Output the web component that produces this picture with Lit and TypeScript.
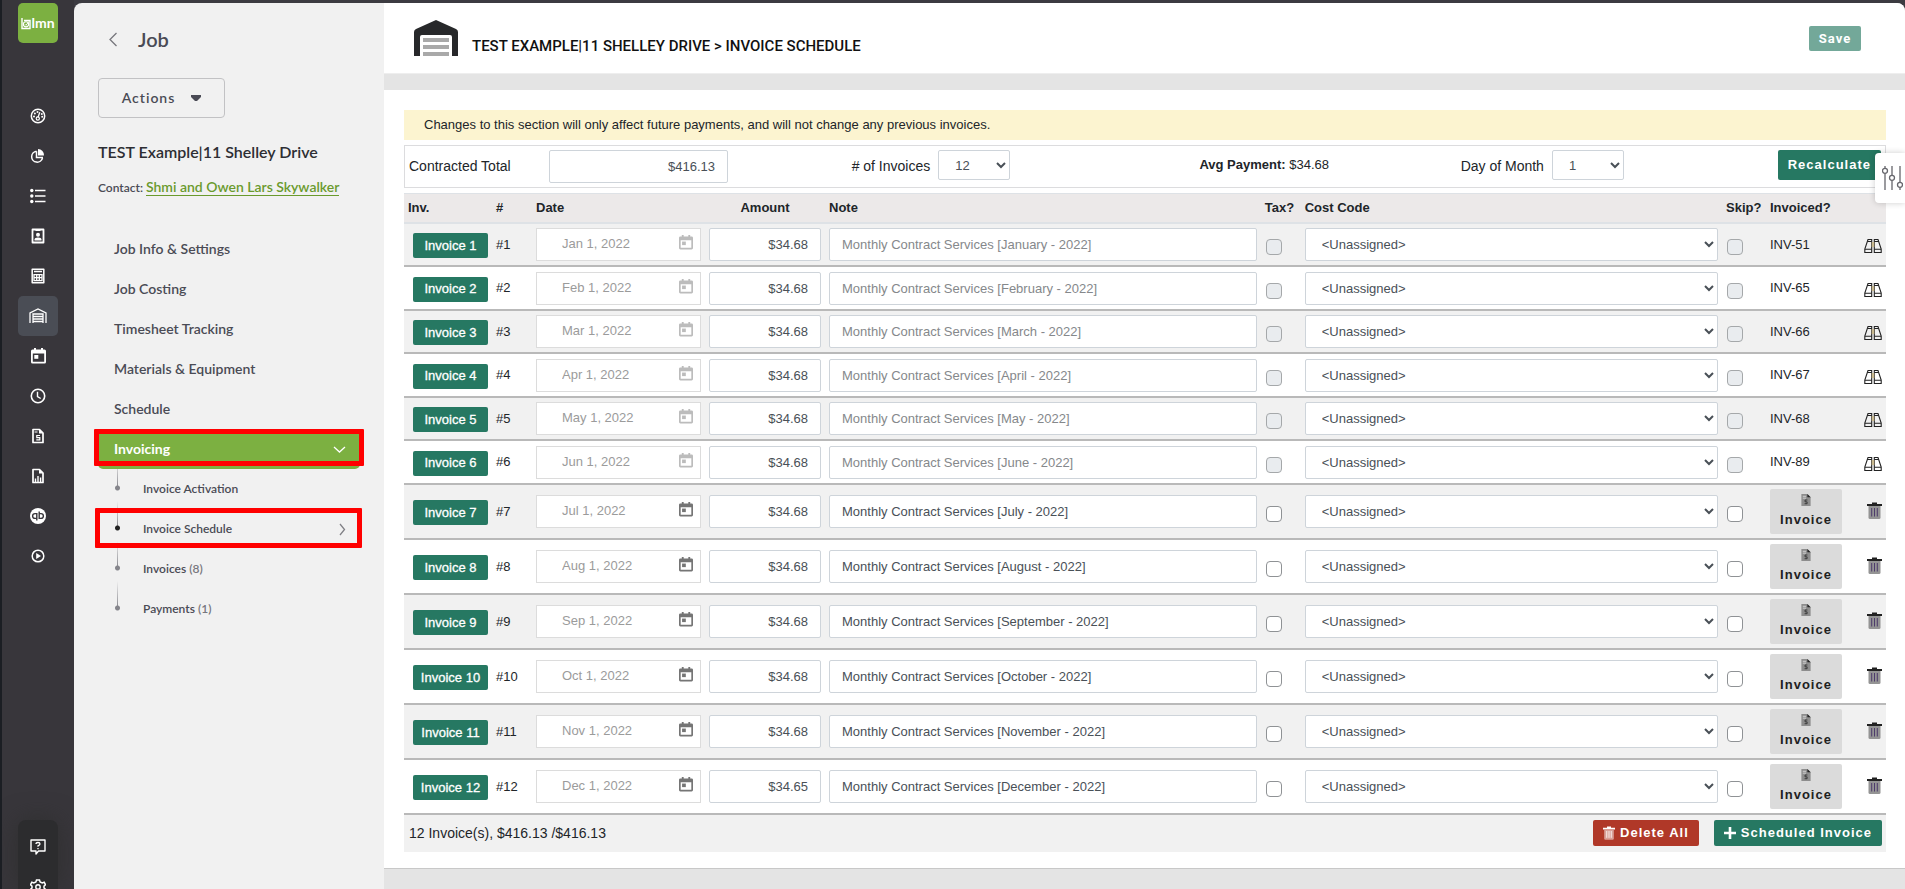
import { LitElement, html, css, svg, nothing } from "lit";
import { customElement } from "lit/decorators.js";

interface Invoice {
  n: number;
  date: string;
  amount: string;
  period: string;
  posted?: string;
}

const INVOICES: Invoice[] = [
  { n: 1, date: "Jan 1, 2022", amount: "$34.68", period: "January", posted: "INV-51" },
  { n: 2, date: "Feb 1, 2022", amount: "$34.68", period: "February", posted: "INV-65" },
  { n: 3, date: "Mar 1, 2022", amount: "$34.68", period: "March", posted: "INV-66" },
  { n: 4, date: "Apr 1, 2022", amount: "$34.68", period: "April", posted: "INV-67" },
  { n: 5, date: "May 1, 2022", amount: "$34.68", period: "May", posted: "INV-68" },
  { n: 6, date: "Jun 1, 2022", amount: "$34.68", period: "June", posted: "INV-89" },
  { n: 7, date: "Jul 1, 2022", amount: "$34.68", period: "July" },
  { n: 8, date: "Aug 1, 2022", amount: "$34.68", period: "August" },
  { n: 9, date: "Sep 1, 2022", amount: "$34.68", period: "September" },
  { n: 10, date: "Oct 1, 2022", amount: "$34.68", period: "October" },
  { n: 11, date: "Nov 1, 2022", amount: "$34.68", period: "November" },
  { n: 12, date: "Dec 1, 2022", amount: "$34.65", period: "December" },
];

const icon = (body: unknown, w = 18, h = w, vb = `0 0 ${w} ${h}`) =>
  html`<svg width=${w} height=${h} viewBox=${vb} aria-hidden="true">${body}</svg>`;

const calendar = svg`<path fill="currentColor" fill-rule="evenodd" d="M3 0h2v1.500h5V0h2v1.500h1.500a1.500 1.500 0 0 1 1.500 1.500v11a1.500 1.500 0 0 1-1.500 1.500h-12A1.500 1.500 0 0 1 0 14V3a1.500 1.500 0 0 1 1.500-1.500H3zM1.800 5.500v8.200h11.400V5.500z"/><rect x="3.300" y="7" width="4" height="3.800" fill="currentColor"/>`;
const sheet = svg`<path d="M2 1.500h6.500L12 5v9.500H2z" fill="none" stroke="currentColor" stroke-width="1.700" stroke-linejoin="round"/><path d="M8 1.200V5.500h4.200z" fill="currentColor"/>`;

const RAIL: { label: string; on?: boolean; art: unknown }[] = [
  {
    label: "Dashboard",
    art: icon(svg`<circle cx="8" cy="8" r="6.700" fill="none" stroke="currentColor" stroke-width="1.500"/><path d="M9.800 4.200 8 9.500" stroke="currentColor" stroke-width="1.300"/><circle cx="7.800" cy="10.500" r="1.600" fill="none" stroke="currentColor" stroke-width="1.200"/><g fill="currentColor"><circle cx="4" cy="8.500" r="1"/><circle cx="4.900" cy="5.400" r="1"/><circle cx="7.500" cy="4" r="1"/><circle cx="11.800" cy="6" r="1"/><circle cx="12.200" cy="8.800" r="1"/></g>`, 16),
  },
  {
    label: "Reports",
    art: icon(svg`<path d="M6.500 3.200A5.500 5.500 0 1 0 12.500 10" fill="none" stroke="currentColor" stroke-width="1.500"/><path d="M6.500 3.200v6.300h6.500" fill="none" stroke="currentColor" stroke-width="1.500"/><path d="M8 1a6 6 0 0 1 6 6.500H8z" fill="currentColor"/>`, 16),
  },
  {
    label: "Lists",
    art: icon(svg`<g fill="currentColor"><circle cx="1.800" cy="2.500" r="1.700"/><circle cx="1.800" cy="8" r="1.700"/><circle cx="1.800" cy="13.500" r="1.700"/><path d="M5 1.800h10.500v1.500H5zM5 7.300h10.500v1.500H5zM5 12.700h10.500v1.500H5z"/></g>`, 16),
  },
  {
    label: "Contacts",
    art: icon(svg`<path d="M1.500 1.500h11v13h-11z" fill="none" stroke="currentColor" stroke-width="1.800" stroke-linejoin="round"/><path d="M4.500 1h5v2h-5z" fill="currentColor"/><circle cx="7" cy="6.800" r="2" fill="currentColor"/><path d="M3.500 12.500v-1q0-2 3.500-2t3.500 2v1z" fill="currentColor"/>`, 14, 16),
  },
  {
    label: "Estimating",
    art: icon(svg`<path d="M1.200 1.200h11.600v13.600H1.200z" fill="none" stroke="currentColor" stroke-width="1.500" stroke-linejoin="round"/><path d="M3 3.500h8M3 6.700h8v6H3zM3 9.700h8M5.700 6.700v6M8.300 6.700v6" fill="none" stroke="currentColor" stroke-width="1.300"/>`, 14, 16),
  },
  {
    label: "Jobs",
    on: true,
    art: icon(svg`<path d="M1 15V5L9 1l8 4v10M4 15V6h10v9M4 8.500h10M4 11h10M4 13.500h10" fill="none" stroke="currentColor" stroke-width="1.300"/>`, 18, 16),
  },
  { label: "Calendar", art: icon(calendar, 15, 16) },
  {
    label: "Time",
    art: icon(svg`<circle cx="8" cy="8" r="6.700" fill="none" stroke="currentColor" stroke-width="1.600"/><path d="M7.500 3.800v4.700l3.200 2" fill="none" stroke="currentColor" stroke-width="1.400"/>`, 16),
  },
  {
    label: "Billing",
    art: icon(svg`${sheet}<path d="M9 7.500H5.800v2.200h3v2.200H5.300M3.500 4h3" fill="none" stroke="currentColor" stroke-width="1.200"/>`, 14, 16),
  },
  {
    label: "Analytics",
    art: icon(svg`${sheet}<path d="M4.500 14v-3.500M7 14V8M9.600 14V9.500" fill="none" stroke="currentColor" stroke-width="1.400"/>`, 14, 16),
  },
  {
    label: "QuickBooks",
    art: icon(svg`<circle cx="8" cy="8" r="8" fill="currentColor"/><path d="M6.800 12.500V5.600H5a2.400 2.400 0 0 0 0 4.800h1.500M9.200 3.500v6.900H11a2.400 2.400 0 0 0 0-4.800H9.500" fill="none" stroke="#38363b" stroke-width="1.400"/>`, 16),
  },
  {
    label: "Tutorials",
    art: icon(svg`<circle cx="8" cy="8" r="5.800" fill="none" stroke="currentColor" stroke-width="1.500"/><path d="M6.200 5v6l4.800-3z" fill="currentColor"/>`, 16),
  },
];

const garage = icon(
  svg`<path d="M0 36V12q0-2 2-3L22 0l20 9q2 1 2 3v24h-6V17q0-2-2-2H8q-2 0-2 2v19z" fill="#27282a"/><path d="M9 18h26v4H9zM9 25h26v4H9zM9 32h26v4H9z" fill="#a9a9a9"/>`,
  44, 36);

const binoculars = icon(
  svg`<g fill="none" stroke="#222" stroke-width="1.100"><path d="M4 1.500h3.700v13H.8v-3.500z"/><path d="M14 1.500h-3.700v13h6.900v-3.500z"/><path d="M3.500 3.500h4.200M10.300 3.500h4.200M1 11.300h6.700M10.300 11.300H17"/></g><path d="M7.700 4h2.600v5H7.700z" fill="#c9b98f"/>`,
  18, 16);

const trash = (cap: string, fill: string, bar: string, w = 15, h = 17) => icon(
  svg`<path d="M0 2h5V.5h5V2h5v2H0z" fill=${cap}/><path d="M1.500 4h12v11.500q0 1.500-1.500 1.500H3q-1.500 0-1.500-1.500z" fill=${fill}/><path d="M4.700 6v8.500M7.500 6v8.500M10.300 6v8.500" stroke=${bar} stroke-width="1"/>`,
  w, h, "0 0 15 17");

const invoiceGlyph = icon(
  svg`<path d="M0 0h6.500L10 3.500V13H0z" fill="#8d8d8d"/><path d="M6.500 0 10 3.500H6.500z" fill="#222"/><path d="M1.500 2.500h3.500M1.500 4.500h3.500" stroke="#d5d5d5"/><path d="M6.500 6.500H4v2h2.200v2H3.500" fill="none" stroke="#333"/>`,
  10, 13);

@customElement("job-rail")
export class JobRail extends LitElement {
  static styles = css`
    :host {
      display: flex;
      flex-direction: column;
      align-items: center;
      justify-content: space-between;
      box-sizing: border-box;
      width: 74px;
      padding: 3px 0 0;
      border-left: 2px solid #1b1e23;
      background: #38363b;
      color: #fff;
      overflow: hidden;
    }
    .top {
      display: flex;
      flex-direction: column;
      align-items: center;
      gap: 53px;
    }
    .logo {
      display: flex;
      align-items: center;
      justify-content: center;
      width: 40px;
      height: 40px;
      border-radius: 5px;
      background: #7cb041;
      color: #fff;
      font: 700 14px/14px Lato, sans-serif;
      text-decoration: none;
    }
    nav {
      display: flex;
      flex-direction: column;
    }
    .item {
      display: flex;
      flex: none;
      align-items: center;
      justify-content: center;
      width: 40px;
      height: 40px;
      padding: 0;
      border: 0;
      border-radius: 5px;
      background: none;
      color: #fff;
    }
    .on {
      background: #4a4d55;
    }
    .foot {
      flex: none;
      padding: 7px 0 0;
      height: 62px;
      border-radius: 8px 8px 0 0;
      background: #2c2c2e;
      box-shadow: 0 0 24px #2f2f2f;
    }
  `;

  render() {
    return html`
      <div class="top">
        <a class="logo" href="#" aria-label="LMN home">
          ${icon(svg`<path d="M1 1v10.500h8V3.500H3" fill="none" stroke="#fff" stroke-width="1.400"/><circle cx="5" cy="7.300" r="2.600" fill="none" stroke="#fff" stroke-width="1.100"/><path d="m4 7.300 1 1 3-4" fill="none" stroke="#fff"/>`, 10, 13)}
          <span>lmn</span>
        </a>
        <nav aria-label="Main">
          ${RAIL.map((r) => html`<button class="item ${r.on ? "on" : ""}" aria-label=${r.label}>${r.art}</button>`)}
        </nav>
      </div>
      <nav class="foot" aria-label="Support">
        <button class="item" aria-label="Help">
          ${icon(svg`<path d="M1 1h14v11H8.500L6 15v-3H1z" fill="none" stroke="currentColor" stroke-width="1.400" stroke-linejoin="round"/><path d="M6 5q0-1.500 2-1.500T10 5q0 1-2 1.800v.9M8 9v1.300" fill="none" stroke="currentColor" stroke-width="1.300"/>`, 16)}
        </button>
        <button class="item" aria-label="Settings">
          ${icon(svg`<path d="m6.500 1 3 0 .6 2 2.100 1 2-.8 1.300 2.600-1.500 1.400v1.800l1.500 1.400-1.300 2.600-2-.8-2.100 1-.6 2h-3l-.6-2-2.100-1-2 .8L.5 10.400 2 9V7.200L.5 5.800l1.300-2.600 2 .8 2.100-1z" fill="none" stroke="currentColor" stroke-width="1.500"/><circle cx="8" cy="8" r="2.200" fill="none" stroke="currentColor" stroke-width="1.400"/>`, 16)}
        </button>
      </nav>
    `;
  }
}

@customElement("job-menu")
export class JobMenu extends LitElement {
  static styles = css`
    :host {
      display: block;
      box-sizing: border-box;
      width: 310px;
      padding: 21px 24px 0;
      border-top-left-radius: 8px;
      background: #f1f1f1;
      color: #4a4b55;
      font: 600 14px/20px Lato, sans-serif;
    }
    a {
      color: inherit;
      text-decoration: none;
    }
    .head {
      display: flex;
      align-items: center;
      gap: 20px;
      padding-left: 11px;
    }
    .back {
      display: flex;
      padding: 0;
      border: 0;
      background: none;
    }
    h1 {
      margin: 0;
      font-size: 20px;
      line-height: 30px;
      font-weight: 600;
    }
    .actions {
      display: flex;
      align-items: center;
      justify-content: center;
      gap: 16px;
      width: 127px;
      height: 40px;
      margin: 24px 0;
      padding: 0;
      border: 1px solid #c2c2c4;
      border-radius: 4px;
      background: none;
      color: inherit;
      font: inherit;
      letter-spacing: 1px;
    }
    h2 {
      margin: 0;
      color: #2d2e33;
      font-size: 16px;
      line-height: 20px;
      font-weight: 600;
    }
    .contact {
      margin: 15px 0 31px;
      font-size: 12px;
    }
    .contact a {
      border-bottom: 1px solid #6a9a2d;
      color: #6a9a2d;
      font-size: 14px;
    }
    ul {
      margin: 0;
      padding: 0;
      list-style: none;
    }
    .link {
      display: flex;
      align-items: center;
      justify-content: space-between;
      height: 40px;
      padding: 0 14px 0 16px;
    }
    .open {
      position: relative;
      z-index: 1;
      border-radius: 5px;
      background: #7cb041;
      color: #fff;
      font-weight: 700;
    }
    .mark {
      position: relative;
    }
    .mark::after {
      content: "";
      position: absolute;
      z-index: 2;
      inset: 0 -4px 3px;
      border: 5px solid #f00;
      border-radius: 1px;
    }
    .sub.mark::after {
      inset: -1px -2px 1px -3px;
    }
    .sub {
      display: flex;
      align-items: center;
      height: 40px;
      padding: 0 14px 0 17px;
      font-size: 12px;
    }
    .stem {
      align-self: flex-start;
      flex: none;
      width: 5px;
      height: 30px;
      margin: -8px 23px 0 0;
      background:
        radial-gradient(circle at 50% 27px, #85858b 2px, #85858b00 3px),
        linear-gradient(#85858b00, #85858b) 2px 0 / 1px 27px no-repeat;
    }
    .here .stem {
      background:
        radial-gradient(circle at 50% 27px, #222 2px, #2220 3px),
        linear-gradient(#85858b00, #85858b) 2px 0 / 1px 27px no-repeat;
    }
    .grow {
      flex: 1;
    }
    .count {
      color: #77777d;
    }
  `;

  private subItem(label: string, count?: number, here = false) {
    return html`
      <li class="sub ${here ? "here mark" : ""}">
        <span class="stem"></span>
        <a class="grow" href="#">${label}${count ? html` <span class="count">(${count})</span>` : nothing}</a>
        ${here ? icon(svg`<path d="m1 1 4.500 5.500L1 12" fill="none" stroke="#808086" stroke-width="1.300"/>`, 7, 13) : nothing}
      </li>
    `;
  }

  render() {
    const items = ["Job Info & Settings", "Job Costing", "Timesheet Tracking", "Materials & Equipment", "Schedule"];
    return html`
      <div class="head">
        <button class="back" aria-label="Back">
          ${icon(svg`<path d="M7.500 1 1 7.500 7.500 14" fill="none" stroke="#77777d" stroke-width="1.300"/>`, 9, 15)}
        </button>
        <h1>Job</h1>
      </div>
      <button class="actions">
        Actions
        ${icon(svg`<path d="M0 0h10v2L6 6H4L0 2z" fill="#4a4b55"/>`, 10, 6)}
      </button>
      <h2>TEST Example|11 Shelley Drive</h2>
      <div class="contact">Contact: <a href="#">Shmi and Owen Lars Skywalker</a></div>
      <ul>
        ${items.map((t) => html`<li><a class="link" href="#">${t}</a></li>`)}
        <li class="mark">
          <a class="link open" href="#">
            Invoicing
            ${icon(svg`<path d="m1 1 5.500 5L12 1" fill="none" stroke="#fff" stroke-width="1.300"/>`, 13, 7)}
          </a>
        </li>
        ${this.subItem("Invoice Activation")}
        ${this.subItem("Invoice Schedule", undefined, true)}
        ${this.subItem("Invoices", 8)}
        ${this.subItem("Payments", 1)}
      </ul>
    `;
  }
}

@customElement("invoice-schedule")
export class InvoiceSchedule extends LitElement {
  static styles = css`
    :host {
      display: block;
      padding: 20px 19px 16px 20px;
      border-bottom: 1px solid #c8c8c8;
      background: #fff;
      color: #212529;
      font: 13px/20px "Liberation Sans", Arial, sans-serif;
    }
    .notice {
      padding: 5px 20px;
      background: #fcf4d0;
    }
    .bar {
      display: grid;
      grid-template-columns: 140px 179px 282fr 189fr 261fr 420fr;
      align-items: start;
      margin: 5px 0;
      padding: 4px;
      border: 1px solid #dcdcde;
    }
    .bar label,
    .avg {
      font-size: 14px;
      line-height: 32px;
    }
    .avg {
      grid-column: 5;
      font-size: 13px;
      line-height: 30px;
    }
    .pair {
      display: flex;
      justify-content: flex-end;
      gap: 8px;
    }
    .end {
      display: flex;
      justify-content: space-between;
    }
    input,
    select {
      box-sizing: border-box;
      width: 100%;
      height: 33px;
      border: 1px solid #ced4da;
      border-radius: 2px;
      background: #fff;
      color: #495057;
      font: inherit;
    }
    input {
      padding: 0 12px;
    }
    select {
      padding: 0 0 0 12px;
    }
    input:disabled {
      color: #85888b;
    }
    .money {
      text-align: right;
    }
    .short {
      width: 72px;
      height: 30px;
    }
    .btn {
      display: inline-flex;
      align-items: center;
      justify-content: center;
      box-sizing: border-box;
      height: 26px;
      padding: 0 10px;
      gap: 5px;
      border: 0;
      border-radius: 2px;
      background: #267862;
      color: #fff;
      font: 700 13px/20px "Liberation Sans", Arial, sans-serif;
      letter-spacing: 1px;
    }
    .tall {
      height: 30px;
    }
    .danger {
      background: #b03828;
    }
    table {
      width: 100%;
      border-collapse: collapse;
      table-layout: fixed;
    }
    .w-inv { width: 88px; }
    .w-no { width: 40px; }
    .w-date { width: 173px; }
    .w-amount { width: 120px; }
    .w-note { width: 29.4%; }
    .w-tax { width: 40px; }
    .w-skip { width: 44px; }
    .w-state { width: 80px; }
    .w-act { width: 40px; }
    th {
      height: 28px;
      padding: 0 4px;
      border-top: 1px solid #dee2e6;
      border-bottom: 2px solid #dee2e6;
      background: #ece9e9;
      text-align: left;
      white-space: nowrap;
    }
    .mid {
      text-align: center;
    }
    td {
      padding: 0 4px;
      border-bottom: 2px solid #b9b9b9;
      vertical-align: middle;
    }
    tbody tr {
      height: 43px;
    }
    tbody tr:nth-child(even) {
      height: 44px;
    }
    tbody tr.draft {
      height: 55px;
    }
    tbody tr:nth-child(odd) {
      background: #f1f1f1;
    }
    .badge {
      display: block;
      width: 75px;
      height: 25px;
      margin: 2px 0 0 5px;
      padding: 0;
      border: 0;
      border-radius: 2px;
      background: #267862;
      color: #fff;
      font: inherit;
      -webkit-text-stroke: 0.3px #fff;
    }
    .date {
      display: flex;
      align-items: center;
      box-sizing: border-box;
      height: 33px;
      padding-right: 7px;
      border: 1px solid #dcdcdc;
      background: #fff;
    }
    .date input {
      flex: 1;
      min-width: 0;
      height: 31px;
      padding: 0 0 2px 25px;
      border: 0;
      color: #9b9b9b;
    }
    .pick {
      display: flex;
      padding: 0 0 4px;
      border: 0;
      background: none;
      color: #757575;
    }
    .pick:disabled {
      color: #bcbcbc;
    }
    .box {
      display: block;
      appearance: none;
      width: 16px;
      height: 16px;
      margin: 5px 0 0 1px;
      padding: 0;
      border: 1px solid #8f9295;
      border-radius: 4px;
    }
    .box:disabled {
      border-color: #a5a8aa;
      background: #e9ecef;
    }
    .make {
      display: flex;
      flex-direction: column;
      align-items: center;
      width: 72px;
      height: 45px;
      padding: 5px 0 0;
      border: 0;
      border-radius: 2px;
      background: #dbdbdb;
      color: #212121;
      font: 700 13px/28px "Liberation Sans", Arial, sans-serif;
      letter-spacing: 1px;
    }
    .act {
      display: flex;
      margin-left: auto;
      padding: 0;
      border: 0;
      background: none;
    }
    .posted .act {
      padding-top: 3px;
    }
    .draft .act {
      padding-bottom: 3px;
    }
    .foot {
      display: flex;
      align-items: center;
      gap: 15px;
      padding: 5px 4px 6px 5px;
      background: #f1f1f1;
      font-size: 14px;
    }
    .sum {
      flex: 1;
    }
  `;

  private row(i: Invoice) {
    const locked = !!i.posted;
    return html`
      <tr class=${locked ? "posted" : "draft"}>
        <td><button class="badge">Invoice ${i.n}</button></td>
        <td>#${i.n}</td>
        <td>
          <div class="date">
            <input aria-label="Date ${i.n}" .value=${i.date} readonly />
            <button class="pick" aria-label="Pick date ${i.n}" ?disabled=${locked}>${icon(calendar, 14, 15, "0 0 15 16")}</button>
          </div>
        </td>
        <td><input class="money" aria-label="Amount ${i.n}" .value=${i.amount} /></td>
        <td>
          <input aria-label="Note ${i.n}" .value=${`Monthly Contract Services [${i.period} - 2022]`} ?disabled=${locked} />
        </td>
        <td><input class="box" type="checkbox" aria-label="Tax ${i.n}" ?disabled=${locked} /></td>
        <td>
          <select aria-label="Cost code ${i.n}"><option>&lt;Unassigned&gt;</option></select>
        </td>
        <td><input class="box" type="checkbox" aria-label="Skip ${i.n}" ?disabled=${locked} /></td>
        <td>${locked ? i.posted : html`<button class="make">${invoiceGlyph}Invoice</button>`}</td>
        <td>
          <button class="act" aria-label=${locked ? `View ${i.posted}` : `Delete invoice ${i.n}`}>
            ${locked ? binoculars : trash("#222", "#949494", "#4d3b6b")}
          </button>
        </td>
      </tr>
    `;
  }

  render() {
    return html`
      <div class="notice">Changes to this section will only affect future payments, and will not change any previous invoices.</div>
      <div class="bar">
        <label for="total">Contracted Total</label>
        <input id="total" class="money" .value=${"$416.13"} />
        <div class="pair">
          <label for="count"># of Invoices</label>
          <select id="count" class="short"><option>12</option></select>
        </div>
        <div class="avg"><b>Avg Payment:</b> $34.68</div>
        <div class="end">
          <div class="pair">
            <label for="day">Day of Month</label>
            <select id="day" class="short"><option>1</option></select>
          </div>
          <button class="btn tall">Recalculate</button>
        </div>
      </div>
      <table>
        <colgroup>
          <col class="w-inv" /><col class="w-no" /><col class="w-date" /><col class="w-amount" /><col class="w-note" />
          <col class="w-tax" /><col /><col class="w-skip" /><col class="w-state" /><col class="w-act" />
        </colgroup>
        <thead>
          <tr>
            <th>Inv.</th><th>#</th><th>Date</th><th class="mid">Amount</th><th>Note</th>
            <th>Tax?</th><th>Cost Code</th><th>Skip?</th><th>Invoiced?</th><th></th>
          </tr>
        </thead>
        <tbody>${INVOICES.map((i) => this.row(i))}</tbody>
      </table>
      <div class="foot">
        <div class="sum">12 Invoice(s), $416.13 /$416.13</div>
        <button class="btn danger">${trash("#fff", "#d9a098", "#fff", 12, 14)}Delete All</button>
        <button class="btn">
          ${icon(svg`<path d="M6 0v12M0 6h12" stroke="#fff" stroke-width="2.600"/>`, 12)}Scheduled Invoice
        </button>
      </div>
    `;
  }
}

@customElement("app-root")
export class AppRoot extends LitElement {
  static styles = css`
    :host {
      position: relative;
      display: flex;
      height: 100vh;
      overflow: hidden;
      background: #3c3b41;
    }
    job-rail {
      flex: none;
    }
    job-menu {
      flex: none;
      margin-top: 3px;
    }
    main {
      flex: 1;
      min-width: 0;
      margin-top: 3px;
      border-top-right-radius: 8px;
      background: #e4e4e4;
    }
    header {
      display: flex;
      align-items: flex-start;
      gap: 14px;
      margin-bottom: 16px;
      padding: 17px 44px 17px 30px;
      border-bottom: 1px solid #eee;
      border-top-right-radius: 8px;
      background: #fff;
    }
    h1 {
      flex: 1;
      margin: 14px 0 -2px;
      color: #111;
      font: 500 15px/24px Roboto, sans-serif;
      text-transform: uppercase;
    }
    .save {
      width: 52px;
      height: 25px;
      margin-top: 6px;
      padding: 0;
      border: 0;
      border-radius: 2px;
      background: #73a899;
      color: #fff;
      font: 700 13px/20px Roboto, sans-serif;
      letter-spacing: 1px;
    }
    .filters {
      position: absolute;
      top: 153px;
      right: 0;
      display: flex;
      align-items: center;
      justify-content: center;
      width: 30px;
      height: 50px;
      padding: 0 0 0 4px;
      border: 0;
      border-radius: 4px 0 0 4px;
      background: #fff;
      box-shadow: 0 0 6px #0003;
    }
  `;

  render() {
    return html`
      <job-rail></job-rail>
      <job-menu></job-menu>
      <main>
        <header>
          ${garage}
          <h1>TEST Example|11 Shelley Drive &gt; Invoice Schedule</h1>
          <button class="save">Save</button>
        </header>
        <invoice-schedule></invoice-schedule>
      </main>
      <button class="filters" aria-label="Filters">
        ${icon(svg`<g fill="none" stroke="#66666c" stroke-width="1.300"><path d="M3 0v2M3 7.500V24M10 0v9M10 14.500V24M18 0v16M18 21.500V24"/><circle cx="3" cy="4.800" r="2.500"/><circle cx="10" cy="11.800" r="2.500"/><circle cx="18" cy="18.800" r="2.500"/></g>`, 21, 24)}
      </button>
    `;
  }
}
